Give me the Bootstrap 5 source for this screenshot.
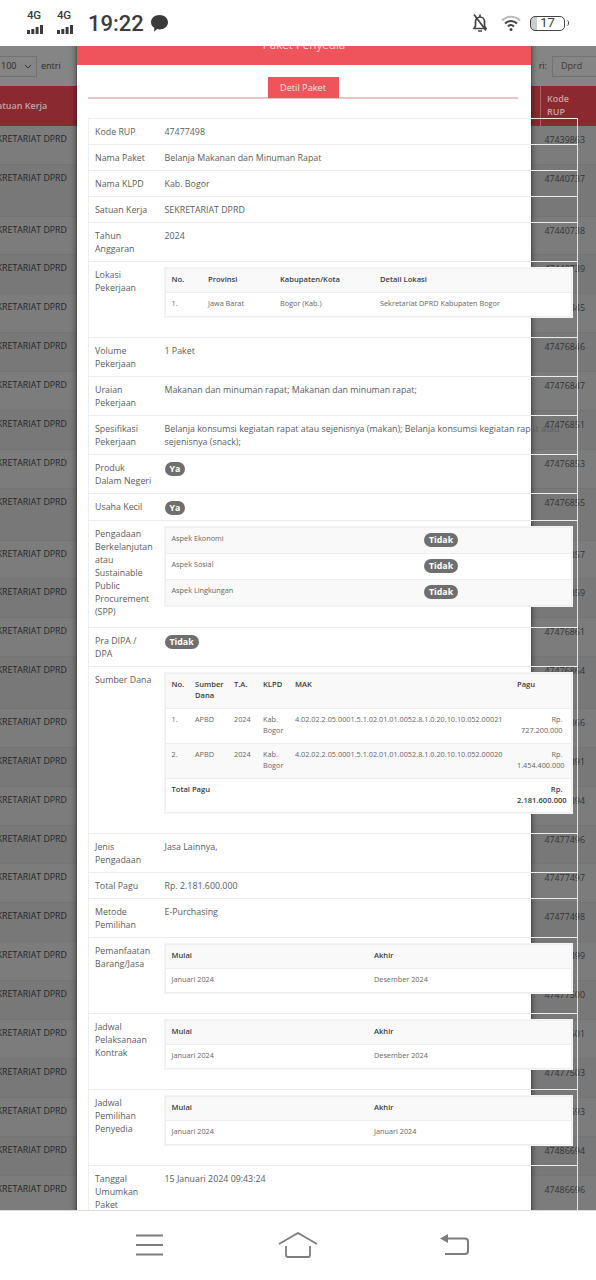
<!DOCTYPE html>
<html lang="id">
<head>
<meta charset="utf-8">
<title>Paket Penyedia</title>
<link href="https://cdn.jsdelivr.net/npm/bootstrap@5.3.0/dist/css/bootstrap.min.css" rel="stylesheet">
<style>
html,body{margin:0;height:1280px;overflow:hidden;background:#fff}
.phone{width:596px;height:1280px;font-family:"Open Sans","Noto Sans",sans-serif}
.sbar{height:46px;padding:0 31px 0 27px;color:#3b3b3b;font-family:Roboto,sans-serif}
.sig{width:16px;margin-right:14px;line-height:1}
.sig span{display:block;font-size:11.5px;font-weight:500;line-height:11px;letter-spacing:-.3px}
.clock{font-size:22px;font-weight:500;margin-right:6px;margin-left:1px}
.batt{width:35px;height:15px;border:1.5px solid #444;border-radius:5px;font-size:13px;line-height:12px;text-align:center;background:linear-gradient(90deg,#ccc 0 6px,#fff 6px);position:relative}
.batt::after{content:"";position:absolute;right:-5px;top:3px;width:3px;height:6px;border-radius:0 3px 3px 0;border-right:1.5px solid #444}
.bellx{margin-right:5px}
.stage{height:1165px;position:relative;overflow:hidden;background:#7c7c7c;border-bottom:1px solid #ddd}
.tools{height:40px;padding:0;background:#858585;font-size:9px;color:#2c2c2c}
.fakesel{width:45px;height:21px;margin-left:-8px;border:1px solid #727272;font-size:9px;padding:0 0 0 8px}
.fakesrc{width:60px;height:21px;border:1px solid #727272;padding-left:8px;margin-right:-16px;margin-left:5px;color:#3a3a3a}
.thead{height:40px;background:#8a2a30;color:#c9a3a5;font-size:9px;font-weight:600}
.thead .hl{margin-left:-8px}
.thead .hr{width:56px;margin-left:auto;line-height:13px;border-left:1px solid #a5666a;padding-left:6px;padding-bottom:2px;align-self:stretch;display:flex;align-items:center}
.brow{height:38.9px;padding-top:7px;font-size:8.8px;line-height:13px;color:#262626;border-bottom:1px solid #747474;white-space:nowrap}
.brow.tall{height:51.7px}
.brow:nth-child(even){background:#787878}
.brow .bl{margin-left:-13px}
.brow .br{margin-left:auto;margin-right:11px;font-size:8.9px;color:#333}
.modalx{position:absolute;left:77px;top:-26px;width:454px;height:1300px;background:#fff;box-shadow:0 0 0 1px rgba(0,0,0,.12),0 0 5px 2px rgba(0,0,0,.35)}
.mhead{height:45px;background:#f0545b;color:#f8d8da;font-size:11.6px;text-align:center;padding-top:16px}
.tabline{margin:12px 13px 19px 11px;height:22px;border-bottom:2px solid #e6c4c8}
.tabx{display:block;width:71px;height:21px;background:#f0545b;color:#fbe3e4;font-size:9.2px;line-height:21px;text-align:center}
.dtable{table-layout:fixed;width:490px;margin:0 0 0 11px;border-collapse:collapse;font-size:8.85px;line-height:13px;color:#5c5c5c;border:1px solid #eee;border-right:1px solid #e4e4e4}
.dtable>tbody>tr>td{padding:7px 7px 5px;border-bottom:1px solid #ececec;vertical-align:top;background:transparent;color:#5c5c5c}
.dtable>tbody>tr>td:first-child{width:69px;padding-left:6px;padding-right:6px}
.itable{table-layout:fixed;width:407px;margin:-1px 0 15px;border-collapse:collapse;font-size:7.3px;line-height:11px;background:#fff;border:1px solid #eee;box-shadow:0 0 0 1px #f4f4f4}
.itable td,.itable th{padding:5px 6px 7px;border-bottom:1px solid #eee;vertical-align:top;color:#666;font-weight:400}
.itable th{color:#3c3c3c;font-weight:600;font-size:7.6px}
.itable .shade>*{background:#f9f9f9}
.itable .lastr>*{padding-bottom:6px}
.itable .rt{text-align:right;padding-right:8px}
.itable.sppt{margin-bottom:16px}
.sppt td{padding:5px 6px 0;height:26px}
.pillx{display:inline-block;background:#6f6f6f;color:#fff;font-weight:700;font-size:8.8px;line-height:14px;padding:0 5px;border-radius:8px}
.nbar{height:68px;padding:0 127px 0 136px;position:relative}
.homex{margin-right:8px}
</style>
</head>
<body>
<div class="phone d-flex flex-column">
  <div class="sbar d-flex align-items-center">
    <div class="sig"><span>4G</span><svg width="16" height="9" viewBox="0 0 16 9"><path fill="#3b3b3b" d="M0 5h3v4H0zM4.300 4h3v5h-3zM8.600 2h3v7h-3zM13 0h3v9h-3z"/></svg></div>
    <div class="sig"><span>4G</span><svg width="16" height="9" viewBox="0 0 16 9"><path fill="#3b3b3b" d="M0 5h3v4H0zM4.300 4h3v5h-3zM8.600 2h3v7h-3zM13 0h3v9h-3z"/></svg></div>
    <div class="clock">19:22</div>
    <svg width="19" height="19" viewBox="0 0 19 19"><path fill="#3b3b3b" d="M9.500 1C14.500 1 18 4.200 18 8.200s-3.500 7.200-8.500 7.200c-.9 0-1.600-.1-2.400-.3L4 17.800l.3-4C2.200 12.500 1 10.500 1 8.200 1 4.200 4.500 1 9.500 1z"/></svg>
    <div class="ms-auto d-flex align-items-center gap-2">
      <svg class="bellx" width="14" height="20" viewBox="2 0 14 20" fill="none" stroke="#444" stroke-width="1.700"><path d="M3 15.500h12l-1.500-2.500V8.500A4.500 4.500 0 0 0 9 4 4.500 4.500 0 0 0 4.500 8.500V13z"/><path d="M7 18h4M3 1.500l12 16M9 1.500V4"/></svg>
      <svg width="22" height="18" viewBox="0 0 20 18" fill="none" stroke="#444" stroke-width="2"><path stroke="#bbb" d="M1 6.500c5-5 13-5 18 0"/><path d="M4 9.500c3.500-3.500 8.500-3.500 12 0M7 12.500c1.800-1.800 4.200-1.800 6 0"/><circle cx="10" cy="15.500" r="1.500" fill="#444" stroke="none"/></svg>
      <div class="batt">17</div>
    </div>
  </div>

  <div class="stage">
    <div class="tools d-flex align-items-center">
      <div class="fakesel d-flex align-items-center justify-content-between"><span>100</span><svg class="me-1" width="8" height="5" viewBox="0 0 8 5" fill="none" stroke="#333"><path d="M1 1l3 3 3-3"/></svg></div>
      <span class="ms-1">entri</span>
      <span class="ms-auto">ri:</span>
      <div class="fakesrc d-flex align-items-center">Dprd</div>
    </div>
    <div class="thead d-flex align-items-center"><span class="hl">Satuan Kerja</span><span class="hr">Kode<br>RUP</span></div>
    <div>
      <div class="brow d-flex"><span class="bl">SEKRETARIAT DPRD</span><span class="br">47439863</span></div>
      <div class="brow tall d-flex"><span class="bl">SEKRETARIAT DPRD</span><span class="br">47440737</span></div>
      <div class="brow d-flex"><span class="bl">SEKRETARIAT DPRD</span><span class="br">47440738</span></div>
      <div class="brow d-flex"><span class="bl">SEKRETARIAT DPRD</span><span class="br">47440739</span></div>
      <div class="brow d-flex"><span class="bl">SEKRETARIAT DPRD</span><span class="br">47440845</span></div>
      <div class="brow d-flex"><span class="bl">SEKRETARIAT DPRD</span><span class="br">47476846</span></div>
      <div class="brow d-flex"><span class="bl">SEKRETARIAT DPRD</span><span class="br">47476847</span></div>
      <div class="brow d-flex"><span class="bl">SEKRETARIAT DPRD</span><span class="br">47476851</span></div>
      <div class="brow d-flex"><span class="bl">SEKRETARIAT DPRD</span><span class="br">47476853</span></div>
      <div class="brow tall d-flex"><span class="bl">SEKRETARIAT DPRD</span><span class="br">47476855</span></div>
      <div class="brow d-flex"><span class="bl">SEKRETARIAT DPRD</span><span class="br">47476857</span></div>
      <div class="brow d-flex"><span class="bl">SEKRETARIAT DPRD</span><span class="br">47476859</span></div>
      <div class="brow d-flex"><span class="bl">SEKRETARIAT DPRD</span><span class="br">47476861</span></div>
      <div class="brow tall d-flex"><span class="bl">SEKRETARIAT DPRD</span><span class="br">47476864</span></div>
      <div class="brow d-flex"><span class="bl">SEKRETARIAT DPRD</span><span class="br">47476866</span></div>
      <div class="brow d-flex"><span class="bl">SEKRETARIAT DPRD</span><span class="br">47476891</span></div>
      <div class="brow d-flex"><span class="bl">SEKRETARIAT DPRD</span><span class="br">47476894</span></div>
      <div class="brow d-flex"><span class="bl">SEKRETARIAT DPRD</span><span class="br">47477496</span></div>
      <div class="brow d-flex"><span class="bl">SEKRETARIAT DPRD</span><span class="br">47477497</span></div>
      <div class="brow d-flex"><span class="bl">SEKRETARIAT DPRD</span><span class="br">47477498</span></div>
      <div class="brow d-flex"><span class="bl">SEKRETARIAT DPRD</span><span class="br">47477499</span></div>
      <div class="brow d-flex"><span class="bl">SEKRETARIAT DPRD</span><span class="br">47477500</span></div>
      <div class="brow d-flex"><span class="bl">SEKRETARIAT DPRD</span><span class="br">47477501</span></div>
      <div class="brow d-flex"><span class="bl">SEKRETARIAT DPRD</span><span class="br">47477503</span></div>
      <div class="brow d-flex"><span class="bl">SEKRETARIAT DPRD</span><span class="br">47486693</span></div>
      <div class="brow d-flex"><span class="bl">SEKRETARIAT DPRD</span><span class="br">47486694</span></div>
      <div class="brow d-flex"><span class="bl">SEKRETARIAT DPRD</span><span class="br">47486696</span></div>
    </div>

    <div class="modalx">
      <div class="mhead">Paket Penyedia</div>
      <div class="tabline d-flex justify-content-center"><span class="tabx">Detil Paket</span></div>
      <table class="dtable">
        <tbody>
        <tr><td>Kode RUP</td><td>47477498</td></tr>
        <tr><td>Nama Paket</td><td>Belanja Makanan dan Minuman Rapat</td></tr>
        <tr><td>Nama KLPD</td><td>Kab. Bogor</td></tr>
        <tr><td>Satuan Kerja</td><td>SEKRETARIAT DPRD</td></tr>
        <tr><td>Tahun Anggaran</td><td>2024</td></tr>
        <tr><td>Lokasi Pekerjaan</td><td>
          <table class="itable">
            <colgroup><col style="width:37px"><col style="width:72px"><col style="width:100px"><col></colgroup>
            <tr class="shade"><th>No.</th><th>Provinsi</th><th>Kabupaten/Kota</th><th>Detail Lokasi</th></tr>
            <tr><td>1.</td><td>Jawa Barat</td><td>Bogor (Kab.)</td><td>Sekretariat DPRD Kabupaten Bogor</td></tr>
          </table></td></tr>
        <tr><td>Volume Pekerjaan</td><td>1 Paket</td></tr>
        <tr><td>Uraian Pekerjaan</td><td>Makanan dan minuman rapat; Makanan dan minuman rapat;</td></tr>
        <tr><td>Spesifikasi Pekerjaan</td><td>Belanja konsumsi kegiatan rapat atau sejenisnya (makan); Belanja konsumsi kegiatan rapat atau sejenisnya (snack);</td></tr>
        <tr><td>Produk Dalam Negeri</td><td><span class="pillx">Ya</span></td></tr>
        <tr><td>Usaha Kecil</td><td><span class="pillx">Ya</span></td></tr>
        <tr><td>Pengadaan Berkelanjutan atau Sustainable Public Procurement (SPP)</td><td>
          <table class="itable sppt">
            <colgroup><col style="width:253px"><col></colgroup>
            <tr class="shade"><td>Aspek Ekonomi</td><td><span class="pillx">Tidak</span></td></tr>
            <tr><td>Aspek Sosial</td><td><span class="pillx">Tidak</span></td></tr>
            <tr class="shade"><td>Aspek Lingkungan</td><td><span class="pillx">Tidak</span></td></tr>
          </table></td></tr>
        <tr><td>Pra DIPA / DPA</td><td><span class="pillx">Tidak</span></td></tr>
        <tr><td>Sumber Dana</td><td>
          <table class="itable">
            <colgroup><col style="width:24px"><col style="width:39px"><col style="width:29px"><col style="width:32px"><col style="width:222px"><col></colgroup>
            <tr class="shade"><th>No.</th><th>Sumber Dana</th><th>T.A.</th><th>KLPD</th><th>MAK</th><th>Pagu</th></tr>
            <tr><td>1.</td><td>APBD</td><td>2024</td><td>Kab. Bogor</td><td>4.02.02.2.05.0001.5.1.02.01.01.0052.8.1.0.20.10.10.052.00021</td><td class="rt">Rp. 727.200.000</td></tr>
            <tr class="shade"><td>2.</td><td>APBD</td><td>2024</td><td>Kab. Bogor</td><td>4.02.02.2.05.0001.5.1.02.01.01.0052.8.1.0.20.10.10.052.00020</td><td class="rt">Rp. 1.454.400.000</td></tr>
            <tr class="lastr"><th colspan="5">Total Pagu</th><th class="rt">Rp. 2.181.600.000</th></tr>
          </table></td></tr>
        <tr><td>Jenis Pengadaan</td><td>Jasa Lainnya,</td></tr>
        <tr><td>Total Pagu</td><td>Rp. 2.181.600.000</td></tr>
        <tr><td>Metode Pemilihan</td><td>E-Purchasing</td></tr>
        <tr><td>Pemanfaatan Barang/Jasa</td><td>
          <table class="itable">
            <colgroup><col style="width:203px"><col></colgroup>
            <tr class="shade"><th>Mulai</th><th>Akhir</th></tr>
            <tr><td>Januari 2024</td><td>Desember 2024</td></tr>
          </table></td></tr>
        <tr><td>Jadwal Pelaksanaan Kontrak</td><td>
          <table class="itable">
            <colgroup><col style="width:203px"><col></colgroup>
            <tr class="shade"><th>Mulai</th><th>Akhir</th></tr>
            <tr><td>Januari 2024</td><td>Desember 2024</td></tr>
          </table></td></tr>
        <tr><td>Jadwal Pemilihan Penyedia</td><td>
          <table class="itable">
            <colgroup><col style="width:203px"><col></colgroup>
            <tr class="shade"><th>Mulai</th><th>Akhir</th></tr>
            <tr><td>Januari 2024</td><td>Januari 2024</td></tr>
          </table></td></tr>
        <tr><td>Tanggal Umumkan Paket</td><td>15 Januari 2024 09:43:24</td></tr>
        </tbody>
      </table>
    </div>
  </div>

  <div class="nbar d-flex align-items-center justify-content-between">
    <svg width="28" height="22" viewBox="0 0 28 22" fill="none" stroke="#7d7d7d" stroke-width="2.200"><path d="M0 1.500h27M0 11h27M0 20.500h27"/></svg>
    <svg class="homex" width="40" height="26" viewBox="0 0 40 26" fill="none" stroke="#7d7d7d" stroke-width="1.800"><path d="M1 12L20 1l19 11"/><path d="M8 14v9q0 2 2 2h20q2 0 2-2v-9"/></svg>
    <svg width="29" height="22" viewBox="0 0 29 22" fill="none" stroke="#7d7d7d" stroke-width="2"><path d="M6 4.500h19q3 0 3 3V17q0 3-3 3H5"/><path fill="#7d7d7d" stroke="none" d="M0 4.500L8 0v9z"/></svg>
  </div>
</div>
</body>
</html>
